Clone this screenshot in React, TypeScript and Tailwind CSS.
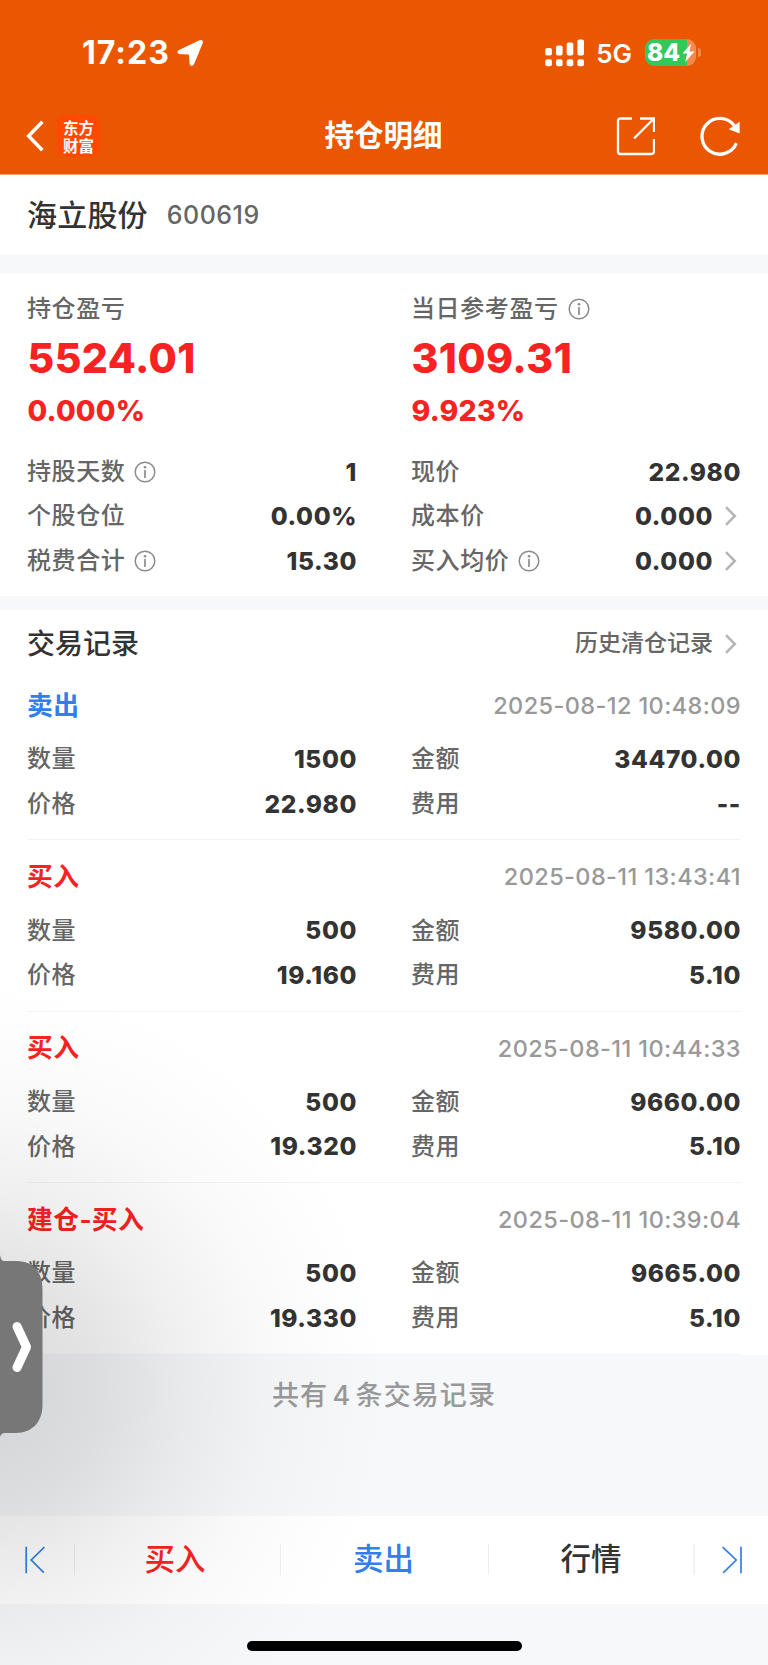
import type { ReactNode } from "react";

type Trade = {
  side: string;
  color: string;
  time: string;
  qty: string;
  price: string;
  amount: string;
  fee: string;
};

const trades: Trade[] = [
  { side: "卖出", color: "text-[#2f80e8]", time: "2025-08-12 10:48:09", qty: "1500", price: "22.980", amount: "34470.00", fee: "--" },
  { side: "买入", color: "text-[#f82222]", time: "2025-08-11 13:43:41", qty: "500", price: "19.160", amount: "9580.00", fee: "5.10" },
  { side: "买入", color: "text-[#f82222]", time: "2025-08-11 10:44:33", qty: "500", price: "19.320", amount: "9660.00", fee: "5.10" },
  { side: "建仓-买入", color: "text-[#f82222]", time: "2025-08-11 10:39:04", qty: "500", price: "19.330", amount: "9665.00", fee: "5.10" },
];

function InfoIcon() {
  return (
    <svg width="22" height="22" viewBox="0 0 22 22" fill="none" className="ml-[9px] shrink-0">
      <circle cx="11" cy="11" r="9.8" stroke="#8c8c8c" strokeWidth="1.5" />
      <circle cx="11" cy="6.3" r="1.3" fill="#8c8c8c" />
      <path d="M11 9V17" stroke="#8c8c8c" strokeWidth="1.7" />
    </svg>
  );
}

function Chevron() {
  return (
    <svg width="13" height="20" viewBox="0 0 13 20" fill="none" className="mr-[4px] ml-[11px] shrink-0">
      <path d="M2 1.2L10.8 10L2 18.8" stroke="#b4b4b4" strokeWidth="2.5" />
    </svg>
  );
}

function Row({ label, value, info, arrow }: { label: string; value: string; info?: boolean; arrow?: boolean }) {
  return (
    <div className="flex h-[44.6px] items-center pt-[1px]">
      <span className="text-[24px] leading-none font-medium tracking-[0.6px] text-[#666]">{label}</span>
      {info && <InfoIcon />}
      <span className="ml-auto text-[24.5px] leading-none font-extrabold tracking-[0.6px] text-[#333]">{value}</span>
      {arrow && <Chevron />}
    </div>
  );
}

function Profit({ label, value, pct, info }: { label: string; value: string; pct: string; info?: boolean }) {
  return (
    <div>
      <div className="flex h-[44px] items-center text-[24px] font-medium tracking-[0.6px] text-[#666]">
        {label}
        {info && <InfoIcon />}
      </div>
      <div className="flex h-[55px] items-center pl-[0.5px] text-[41px] font-extrabold tracking-[0.4px] text-[#f82222]">{value}</div>
      <div className="flex h-[49px] items-center pt-[1px] pl-[0.5px] text-[28.5px] font-extrabold tracking-[0.2px] text-[#f82222]">
        {pct}
      </div>
    </div>
  );
}

function StatusBar() {
  return (
    <div className="flex h-[104px] items-center pt-[1px] pl-[82px]">
      <span className="text-[32px] leading-none font-bold tracking-[1px]">17:23</span>
      <svg width="28" height="28" viewBox="0 0 28 28" className="ml-[7px]">
        <path
          d="M1.5 11.3L22.5 1.3Q26.7 0.2 25.7 4.3L17 25.3Q14.5 28.5 12.6 25.3L12 16.4Q12 15.5 11 15.4L1.8 15Q-0.8 13.2 1.5 11.3Z"
          fill="white"
        />
      </svg>
      <svg width="40" height="28" viewBox="0 0 40 28" fill="white" className="ml-auto shrink-0">
        <rect x="0.3" y="9" width="6.6" height="7.5" rx="1.8" />
        <rect x="11" y="6.5" width="6.6" height="10" rx="1.8" />
        <rect x="21.7" y="3.4" width="6.6" height="13.1" rx="1.8" />
        <rect x="32.4" y="0.4" width="6.6" height="16.1" rx="1.8" />
        <rect x="0.3" y="20.3" width="6.6" height="7" rx="2" />
        <rect x="11" y="20.3" width="6.6" height="7" rx="2" />
        <rect x="21.7" y="20.3" width="6.6" height="7" rx="2" />
        <rect x="32.4" y="20.3" width="6.6" height="7" rx="2" />
      </svg>
      <span className="ml-[11px] shrink-0 pt-[2px] text-[26px] leading-[32px] font-semibold">5G</span>
      <div className="relative ml-[13px] flex h-[27px] w-[51px] items-center rounded-[9px] bg-[linear-gradient(90deg,#34c759_42px,#f28a50_42px)]">
        <span className="ml-[2px] text-[24.5px] leading-none font-extrabold">84</span>
        <svg width="13" height="20" viewBox="0 0 13 20" className="absolute top-[4px] left-[37px]">
          <path d="M9.3 0.5L0.5 10.6H5.2L3.2 19L12.5 8.4H7.4Z" fill="white" />
        </svg>
      </div>
      <div className="mr-[67px] ml-[2px] h-[9px] w-[3px] rounded-r-full bg-[#f28a50]" />
    </div>
  );
}

function NavBar() {
  return (
    <div className="flex h-[64px] items-center">
      <div className="flex flex-1 items-center pl-[25px]">
        <svg width="20" height="32" viewBox="0 0 20 32" fill="none">
          <path d="M17.4 1.8L3.6 16L17.4 30.2" stroke="white" strokeWidth="3.5" />
        </svg>
        <div className="ml-[12px] flex h-[42px] w-[43px] flex-col items-center justify-center rounded-[9px] bg-[#ff4800] font-['Noto_Sans_CJK_SC'] text-[15.5px] leading-[18.3px] font-bold">
          <span>东方</span>
          <span>财富</span>
        </div>
      </div>
      <h1 className="pl-[1px] text-[29.5px] leading-none font-bold">持仓明细</h1>
      <div className="flex flex-1 items-center justify-end gap-[44px] pr-[27px]">
        <svg width="40" height="40" viewBox="0 0 40 40" fill="none" stroke="white" strokeWidth="2.3">
          <path d="M17 2.5H5.5Q3 2.5 3 5V35.5Q3 38 5.5 38H36.5Q39 38 39 35.5V23" />
          <path d="M25 2.5H39V16M39 2.5L19 22.5" />
        </svg>
        <svg width="42" height="40" viewBox="0 0 42 40" fill="none">
          <path d="M37.4 27.2A17.9 17.9 0 1 1 35.2 9.5" stroke="white" strokeWidth="3.3" />
          <path d="M40.6 5.8V17.6L29.6 13.2Z" fill="white" />
        </svg>
      </div>
    </div>
  );
}

function Tab({ children, className }: { children: ReactNode; className: string }) {
  return (
    <button className={`shrink-0 pb-[1px] text-center text-[30.5px] leading-none font-medium ${className}`}>{children}</button>
  );
}

function BottomBar() {
  return (
    <nav className="flex h-[88.5px] items-center bg-white">
      <div className="flex w-[74px] pl-[24px]">
        <svg width="22" height="28" viewBox="0 0 22 28" fill="none" stroke="#2f80e8" strokeWidth="1.7">
          <path d="M2.2 0.8V27.3M20.4 1.2L7.2 14L19.8 26.6" />
        </svg>
      </div>
      <div className="h-[31px] w-px bg-[#ececec]" />
      <Tab className="w-[205px] pr-[5px] text-[#f82222]">买入</Tab>
      <div className="h-[31px] w-px bg-[#f0f0f0]" />
      <Tab className="w-[207px] pr-[2px] text-[#2f80e8]">卖出</Tab>
      <div className="h-[31px] w-px bg-[#ececec]" />
      <Tab className="w-[204px] text-[#333]">行情</Tab>
      <div className="h-[31px] w-[2px] bg-[#f2f2f2]" />
      <div className="flex w-[73px] pl-[26px]">
        <svg width="22" height="28" viewBox="0 0 22 28" fill="none" stroke="#2f80e8" strokeWidth="1.7">
          <path d="M20 0.8V27.3M1.7 1.2L15.2 14L2.2 26.8" />
        </svg>
      </div>
    </nav>
  );
}

export default function App() {
  return (
    <div className="relative flex h-[1665px] w-[768px] flex-col overflow-hidden bg-[#f7f8fa] font-[Inter,'Noto_Sans_CJK_SC',sans-serif] leading-none">
      <header className="h-[175px] shrink-0 border-b border-[#f2a070] bg-[#eb5600] text-white">
        <StatusBar />
        <NavBar />
      </header>

      <section className="flex h-[80px] shrink-0 items-center bg-white pb-[1px] pl-[27px]">
        <span className="text-[30px] font-medium tracking-[0.2px] text-[#333]">海立股份</span>
        <span className="ml-[19px] pt-px text-[25px] font-medium tracking-[0.5px] text-[#666]">600619</span>
      </section>

      <section className="mt-[18px] h-[323px] shrink-0 bg-white px-[27px] pt-[14px]">
        <div className="grid grid-cols-2 gap-x-[54px]">
          <Profit label="持仓盈亏" value="5524.01" pct="0.000%" />
          <Profit label="当日参考盈亏" value="3109.31" pct="9.923%" info />
        </div>
        <div className="mt-[14px] grid grid-cols-2 gap-x-[54px]">
          <Row label="持股天数" value="1" info />
          <Row label="现价" value="22.980" />
          <Row label="个股仓位" value="0.00%" />
          <Row label="成本价" value="0.000" arrow />
          <Row label="税费合计" value="15.30" info />
          <Row label="买入均价" value="0.000" info arrow />
        </div>
      </section>

      <section className="mt-[14px] shrink-0 bg-white px-[27px]">
        <div className="flex h-[59px] items-center pt-[8px]">
          <h2 className="text-[28px] font-medium text-[#333]">交易记录</h2>
          <span className="ml-auto text-[23px] font-medium text-[#666]">历史清仓记录</span>
          <Chevron />
        </div>
        {trades.map((t) => (
          <div key={t.time} className="h-[171.4px] border-b border-[#f4f4f4]">
            <div className="flex h-[67.4px] items-center justify-between pt-[5.6px]">
              <span className={`text-[25.8px] font-bold tracking-[0.4px] ${t.color}`}>{t.side}</span>
              <span className="text-[23.5px] font-medium tracking-[0.4px] text-[#999]">{t.time}</span>
            </div>
            <div className="grid grid-cols-2 gap-x-[54px]">
              <Row label="数量" value={t.qty} />
              <Row label="金额" value={t.amount} />
              <Row label="价格" value={t.price} />
              <Row label="费用" value={t.fee} />
            </div>
          </div>
        ))}
      </section>

      <p className="flex h-[80px] shrink-0 items-center justify-center pt-px text-[27px] font-medium tracking-[1.1px] text-[#999] [word-spacing:-4px]">
        共有 4 条交易记录
      </p>

      <div className="mt-auto shrink-0">
        <BottomBar />
        <div className="flex h-[60.8px] justify-center pt-[37px]">
          <div className="h-[9.5px] w-[275px] rounded-full bg-black" />
        </div>
      </div>

      {/* soft shadow cast by the drawer handle */}
      <div className="pointer-events-none absolute top-[960px] left-0 h-[705px] w-[420px] bg-[radial-gradient(ellipse_410px_410px_at_-20px_430px,rgba(0,0,0,0.15)_0%,rgba(0,0,0,0.105)_30%,rgba(0,0,0,0.058)_50%,rgba(0,0,0,0.025)_70%,rgba(0,0,0,0.008)_88%,transparent_100%)]" />

      <svg width="46" height="184" viewBox="0 0 46 184" className="absolute top-[1255px] left-0">
        <path d="M0 0Q1 6 4 6H16C32 6 42.5 15 42.5 35V150C42.5 167 32 178 16 178H4Q1 178.5 0 182Z" fill="#777778" />
        <path d="M17 71.5L26.5 92L17 112.5" fill="none" stroke="white" strokeWidth="9" strokeLinecap="round" strokeLinejoin="round" />
      </svg>
    </div>
  );
}
